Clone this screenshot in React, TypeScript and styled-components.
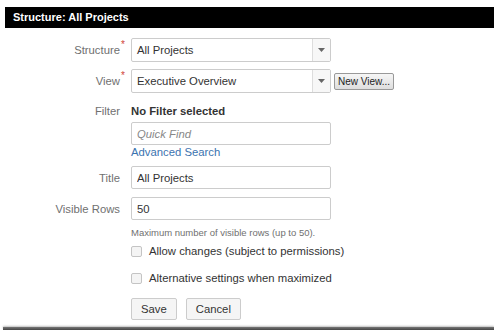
import * as React from 'react';
import styled, { createGlobalStyle } from 'styled-components';

const GlobalStyle = createGlobalStyle`
  body {
    margin: 0;
    background: #fff;
    font-family: "Liberation Sans", Arial, sans-serif;
    color: #333;
  }
`;

/**
 * Dialog for editing one structure board.
 */
export default function App() {
  return (
    <>
      <GlobalStyle />
      <Page>
        <Header>Structure: All Projects</Header>
        <Form>
          <Label>
            Structure<Required>*</Required>
          </Label>
          <Field>
            <Select value="All Projects" />
          </Field>

          <Label>
            View<Required>*</Required>
          </Label>
          <Field>
            <Select value="Executive Overview" />
            <SmallButton>New View...</SmallButton>
          </Field>

          <Label compact>Filter</Label>
          <Stack>
            <FilterName>No Filter selected</FilterName>
            <TextInput placeholder="Quick Find" italic />
            <Link>Advanced Search</Link>
          </Stack>

          <Label>Title</Label>
          <Field>
            <TextInput defaultValue="All Projects" />
          </Field>

          <Label>Visible Rows</Label>
          <Stack>
            <TextInput defaultValue="50" />
            <Help>Maximum number of visible rows (up to 50).</Help>
          </Stack>

          <span />
          <Checks>
            <CheckRow>
              <Box />
              Allow changes (subject to permissions)
            </CheckRow>
            <CheckRow>
              <Box />
              Alternative settings when maximized
            </CheckRow>
          </Checks>

          <span />
          <Buttons>
            <Button>Save</Button>
            <Button>Cancel</Button>
          </Buttons>
        </Form>
        <BottomEdge />
      </Page>
    </>
  );
}

const Select = ({ value }: { value: string }) => (
  <SelectBox>
    <SelectText>{value}</SelectText>
    <Arrow>
      <svg width="7" height="4" viewBox="0 0 7 4">
        <path d="M0 0h7L3.5 4z" fill="#666" />
      </svg>
    </Arrow>
  </SelectBox>
);

const Page = styled.div`
  width: 494px;
  height: 330px;
  padding-top: 7px;
  box-sizing: border-box;
  display: flex;
  flex-direction: column;
`;

const Header = styled.div`
  margin-left: 5px;
  height: 21px;
  line-height: 21px;
  background: #000;
  color: #fff;
  font-size: 11px;
  font-weight: bold;
  padding-left: 8px;
`;

const Form = styled.div`
  display: grid;
  grid-template-columns: 120px 1fr;
  column-gap: 11px;
  row-gap: 7px;
  align-items: start;
  margin-top: 10px;
  font-size: 11.3px;
`;

const Label = styled.div<{ compact?: boolean }>`
  position: relative;
  text-align: right;
  color: #707070;
  line-height: ${props => (props.compact ? '14px' : '24px')};
  margin-top: ${props => (props.compact ? '4px' : '0')};
`;

const Required = styled.span`
  position: absolute;
  right: -5px;
  top: -5px;
  color: #d04437;
  font-size: 10px;
`;

const Field = styled.div`
  display: flex;
  align-items: center;
  gap: 3px;
`;

const Stack = styled.div`
  display: flex;
  flex-direction: column;
  align-items: flex-start;
`;

const SelectBox = styled.div`
  display: flex;
  width: 200px;
  height: 24px;
  box-sizing: border-box;
  border: 1px solid #ccc;
  border-radius: 2px;
  background: #fff;
`;

const SelectText = styled.div`
  flex: 1;
  padding-left: 5px;
  line-height: 22px;
  color: #333;
`;

const Arrow = styled.div`
  width: 17px;
  border-left: 1px solid #ddd;
  background: #f7f7f7;
  display: flex;
  align-items: center;
  justify-content: center;
`;

const SmallButton = styled.div`
  height: 17px;
  line-height: 15px;
  box-sizing: border-box;
  padding: 0 3px;
  font-size: 10px;
  border: 1px solid #999;
  border-radius: 2px;
  background: linear-gradient(#f6f6f6, #dedede);
  color: #222;
`;

const FilterName = styled.div`
  font-weight: bold;
  color: #333;
  line-height: 14px;
  margin-top: 4px;
  margin-bottom: 4px;
`;

const TextInput = styled.input<{ italic?: boolean }>`
  width: 200px;
  height: 23px;
  box-sizing: border-box;
  border: 1px solid #ccc;
  border-radius: 2px;
  padding: 0 5px;
  font-family: "Liberation Sans", Arial, sans-serif;
  font-size: 11.3px;
  color: #333;
  font-style: ${props => (props.italic ? 'italic' : 'normal')};
  outline: none;

  &::placeholder {
    color: #888;
  }
`;

const Link = styled.a`
  color: #3b73af;
  line-height: 14px;
`;

const Help = styled.div`
  font-size: 9.5px;
  line-height: 12px;
  color: #707070;
  margin-top: 7px;
`;

const Checks = styled.div`
  display: flex;
  flex-direction: column;
  gap: 13px;
  margin-top: -2px;
`;

const CheckRow = styled.label`
  display: flex;
  align-items: center;
  gap: 7px;
  color: #333;
  line-height: 14px;
`;

const Box = styled.span`
  display: inline-block;
  width: 9px;
  height: 9px;
  border: 1px solid #c4c4c4;
  border-radius: 2px;
  background: #f4f4f4;
`;

const Buttons = styled.div`
  display: flex;
  gap: 9px;
  margin-top: 6px;
`;

const Button = styled.div`
  height: 22px;
  line-height: 20px;
  box-sizing: border-box;
  padding: 0 9px;
  border: 1px solid #ccc;
  border-radius: 2px;
  background: #f5f5f5;
  color: #333;
`;

const BottomEdge = styled.div`
  margin-top: auto;
  margin-left: 3px;
  height: 3px;
  background: linear-gradient(#777, #444);
  box-shadow: 0 -1px 2px rgba(0, 0, 0, 0.25);
`;
